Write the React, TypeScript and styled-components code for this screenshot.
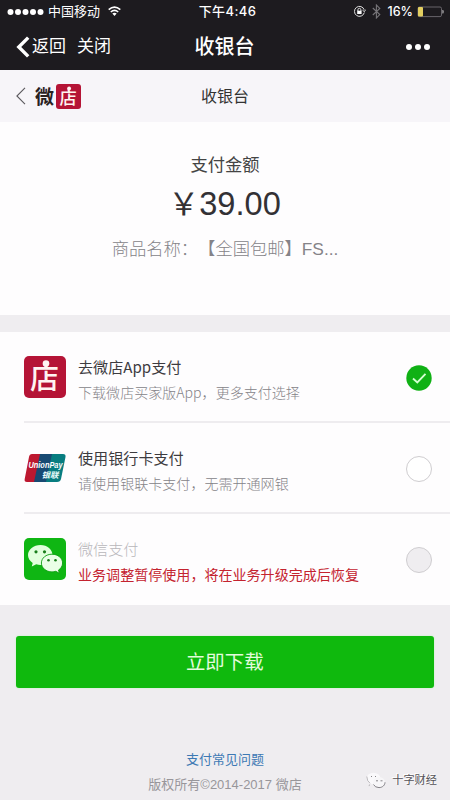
import React from 'react';
import styled, { createGlobalStyle } from 'styled-components';

const GlobalStyle = createGlobalStyle`
  * { box-sizing: border-box; }
  body {
    margin: 0;
    background: #efedf0;
    font-family: "Liberation Sans", "Noto Sans CJK SC", sans-serif;
    color: #333;
    text-spacing-trim: space-all;
  }
  svg { display: block; flex: none; }
`;

const Page = styled.div`
  width: 450px;
  height: 800px;
  display: flex;
  flex-direction: column;
  overflow: hidden;
  background: #efedf0;
`;

const TopArea = styled.div`
  height: 70px;
  background: #1d1b1f;
  color: #fff;
`;

const ThreeColumns = styled.div`
  display: grid;
  grid-template-columns: 1fr auto 1fr;
  align-items: center;
`;

const StatusBar = styled(ThreeColumns)`
  height: 23px;
  padding: 0 6px 0 7px;
  font: 400 13px/23px Inter, "Noto Sans CJK SC", sans-serif;
`;

const Side = styled.div<{ $end?: boolean; $gap?: number }>`
  display: flex;
  align-items: center;
  justify-content: ${p => (p.$end ? 'flex-end' : 'flex-start')};
  gap: ${p => p.$gap ?? 0}px;
`;

const Time = styled.span`
  padding-left: 4px;
  font-weight: 500;
  letter-spacing: 0.4px;
`;

const Percent = styled.span`
  font-size: 12.5px;
  font-weight: 500;
  margin: 0 -2px 0 1px;
`;

const NavBar = styled(ThreeColumns)`
  height: 47px;
  padding: 0 20px 0 16px;
`;

const NavText = styled.span<{ $spaced?: boolean }>`
  font-size: 17px;
  line-height: 46px;
  margin-left: ${p => (p.$spaced ? 11 : 2)}px;
`;

const NavTitle = styled.h1`
  margin: 0 0 0 3px;
  font-size: 20px;
  line-height: 44px;
  font-weight: 500;
`;

const ShopHeader = styled(ThreeColumns)`
  height: 52px;
  padding: 0 16px;
  background: #f7f5f9;
`;

const ShopTitle = styled.h2`
  margin: 1px 0 0;
  font-size: 16px;
  line-height: 51px;
  font-weight: 400;
`;

const Wordmark = styled.span`
  margin: 0 2px 0 9px;
  font: 700 19px/28px "Noto Sans CJK SC", sans-serif;
  color: #29211f;
`;

const Amount = styled.section`
  height: 193px;
  padding-top: 30px;
  display: flex;
  flex-direction: column;
  align-items: center;
  background: #fefdfe;
`;

const AmountLabel = styled.div`
  font-size: 17.3px;
  line-height: 26px;
  color: #444;
`;

const Price = styled.div`
  margin-right: 1px;
  font-size: 32.6px;
  line-height: 52px;
  color: #333135;
`;

const Yen = styled.span`
  font-size: 31px;
  font-weight: 400;
`;

const Product = styled.div`
  margin-top: -4px;
  font-size: 17.3px;
  line-height: 44px;
  font-weight: 300;
  color: #858388;
  white-space: nowrap;
`;

const Methods = styled.section`
  margin-top: 17px;
  height: 273px;
  padding-left: 24px;
  background: #fefdfe;
`;

const Method = styled.div<{ $divided?: boolean }>`
  height: 91px;
  padding-right: 18px;
  display: flex;
  align-items: center;
  border-bottom: 2px solid ${p => (p.$divided ? '#eeecef' : 'transparent')};
`;

const MethodText = styled.div`
  flex: 1;
  margin: 5px 0 0 12px;
  font-family: "Noto Sans CJK SC", sans-serif;
`;

const MethodName = styled.div<{ $disabled?: boolean }>`
  font-size: 15.1px;
  line-height: 26px;
  font-weight: ${p => (p.$disabled ? 300 : 400)};
  color: ${p => (p.$disabled ? '#b8b6ba' : '#3d3b3f')};
`;

const MethodNote = styled.div<{ $warning?: boolean }>`
  font-size: 14.05px;
  line-height: 26px;
  font-weight: ${p => (p.$warning ? 400 : 300)};
  color: ${p => (p.$warning ? '#c4232f' : '#858388')};
`;

const Radio = styled.span<{ $disabled?: boolean }>`
  width: 26px;
  height: 26px;
  margin-top: 2px;
  border: 1.5px solid #cfcdd0;
  border-radius: 50%;
  background: ${p => (p.$disabled ? '#efedf0' : '#fff')};
`;

const DownloadButton = styled.button`
  margin: 31px 16px 0 15.5px;
  height: 52px;
  flex: none;
  border: 0;
  border-radius: 3px;
  background: #0fb90d;
  color: #e3fbdc;
  font: 400 19.4px/50px "Liberation Sans", "Noto Sans CJK SC", sans-serif;
  box-shadow: 0 0 2px #b9f5b9;
`;

const Footer = styled.footer`
  position: relative;
  flex: 1;
  padding-top: 60px;
  text-align: center;
  font-size: 13px;
  line-height: 24px;
  color: #98969a;
`;

const HelpLink = styled.a`
  display: block;
  color: #3d79b4;
`;

const Copyright = styled.div`
  margin-top: 1px;
`;

const Watermark = styled.div`
  position: absolute;
  right: 13px;
  top: 82px;
  display: flex;
  align-items: center;
  gap: 6px;
  font-size: 11.2px;
  line-height: 20px;
  color: #555358;
  text-shadow: -1px -1px 0 #fff;
`;

const Signal = () => (
  <svg width="37" height="8" viewBox="0 0 37 8" fill="#fff">
    {[3.5, 11, 18.5, 26, 33.5].map(x => <circle key={x} cx={x} cy="4" r="3" />)}
  </svg>
);

const Wifi = () => (
  <svg width="13" height="11" viewBox="0 0 13 11" fill="none" stroke="#fff" strokeWidth="1.6">
    <path d="M.7 3.7Q6.5-1.3 12.3 3.7M2.8 6Q6.5 2.8 10.2 6" />
    <path d="M4.3 7.6Q6.5 5.8 8.7 7.6L6.5 10Z" fill="#fff" stroke="none" />
  </svg>
);

const RotationLock = () => (
  <svg width="13" height="13" viewBox="0 0 13 13" fill="none" stroke="#ddd" strokeWidth="1">
    <path d="M11.3 7.6A5 5 0 1 1 11.2 4.8M9.5 5.2l1.9 1.5 1.2-2" />
    <path d="M4.9 6V4.8a1.5 1.5 0 0 1 3 0V6" />
    <rect x="4.2" y="5.7" width="4.4" height="3.3" fill="#fff" stroke="none" />
  </svg>
);

const Bluetooth = () => (
  <svg width="9" height="15" viewBox="0 0 9 15" fill="none" stroke="#777579" strokeWidth="1.1">
    <path d="M.8 4l7 6.6L4.4 14V1l3.4 3.4L.8 11" />
  </svg>
);

const Battery = () => (
  <svg width="27" height="12" viewBox="0 0 27 12">
    <rect x="1" y="1" width="23.5" height="9.6" rx="1.5" fill="none" stroke="#68656b" />
    <rect x="1" y="1" width="5" height="9.6" rx="1" fill="#e3cf60" />
    <path d="M25.5 4h.7q.8 1.8 0 3.6h-.7z" fill="#ddd" />
  </svg>
);

const BackArrow = () => (
  <svg width="14" height="22" viewBox="0 0 14 22" fill="none" stroke="#fff" strokeWidth="3.4">
    <path d="M12.2 1.6 2.8 11l9.4 9.4" />
  </svg>
);

const More = () => (
  <svg width="25" height="8" viewBox="0 0 25 8" fill="#fff">
    <circle cx="4" cy="4" r="3" /><circle cx="13" cy="4" r="3" /><circle cx="22" cy="4" r="3" />
  </svg>
);

const ThinArrow = () => (
  <svg width="10" height="18" viewBox="0 0 10 18" fill="none" stroke="#5b595e" strokeWidth="1.1">
    <path d="M9 .8.9 9 9 17.2" />
  </svg>
);

const ShopLogo = ({ size }: { size: number }) => (
  <svg width={size} height={size} viewBox="0 0 42 42">
    <rect width="42" height="42" rx="5" fill="#b51436" />
    <text x="20.5" y="33" textAnchor="middle" fontFamily="Noto Sans CJK SC" fontWeight="500" fontSize="29" fill="#fff4f2">店</text>
    <circle cx="22" cy="7.5" r="3.3" fill="#fff4f2" />
  </svg>
);

const UnionPay = () => (
  <svg width="42" height="42" viewBox="0 0 42 42">
    <path d="M8 7h13l-6 28H3q-3 0-2.3-3L5 10q.5-3 3-3z" fill="#bd1830" />
    <path d="M16 7h15l-6 28H10z" fill="#184a73" />
    <path d="M28 7h11q3 0 2.5 3L37 32q-.6 3-4 3H22z" fill="#087d80" />
    <text x="4.5" y="21" textLength="34" lengthAdjust="spacingAndGlyphs" fontFamily="Liberation Sans" fontStyle="italic" fontWeight="700" fontSize="8.5" fill="#fff">UnionPay</text>
    <text x="17.5" y="30.5" textLength="17" lengthAdjust="spacingAndGlyphs" fontFamily="Noto Sans CJK SC" fontStyle="italic" fontWeight="700" fontSize="8" fill="#e9fbfa">银联</text>
  </svg>
);

const WeChat = () => (
  <svg width="42" height="42" viewBox="0 0 42 42">
    <rect width="42" height="42" rx="5" fill="#0fb613" />
    <path d="M16.5 7C9.6 7 4 11.5 4 17.1c0 3.2 1.8 6 4.7 7.9l-.9 3.5 4.4-2.2c1.4.4 2.8.6 4.3.6 6.9 0 12-4.2 12-9.800S23.400 7 16.500 7z" fill="#e2ffdd" />
    <path d="M28 16.200c-5.900 0-10.600 3.900-10.600 8.800s4.700 8.900 10.600 8.900c1.300 0 2.600-.2 3.800-.6l3.600 2-.9-3.200c2.500-1.600 4.100-4.100 4.100-7.100 0-4.900-4.700-8.800-10.600-8.800z" fill="#eaffe7" stroke="#0b9c10" strokeWidth=".9" />
    <g fill="#197d1b"><circle cx="12" cy="13.8" r="1.6" /><circle cx="20.5" cy="13.8" r="1.6" /><circle cx="24.500" cy="22.300" r="1.300" /><circle cx="31.500" cy="22.300" r="1.300" /></g>
  </svg>
);

const CheckedMark = styled.svg`
  margin-top: 2px;
`;

const Checked = () => (
  <CheckedMark width="26" height="26" viewBox="0 0 26 26">
    <circle cx="13" cy="13" r="12.7" fill="#10b115" />
    <path d="m7 13.5 4.3 4 8.2-8.7" fill="none" stroke="#d3ffd0" strokeWidth="1.9" />
  </CheckedMark>
);

const WatermarkIcon = () => (
  <svg width="20" height="17" viewBox="0 0 20 17">
    <ellipse cx="7.5" cy="6.5" rx="7" ry="5.8" fill="#faf9fb" />
    <path d="M.8 4.5Q1 9.5 4 11.2M3.5 12.5l-.4 1.6" fill="none" stroke="#a9a7ab" strokeWidth=".8" />
    <ellipse cx="13" cy="10.3" rx="6" ry="5.3" fill="#f7f6f8" />
    <path d="M7.5 12.5Q9 15.6 13 15.6c3.5 0 6-2.5 6-5.3" fill="none" stroke="#77757a" strokeWidth=".9" />
    <path d="M10 8.8h2M14.500 8.800h2M5 4.500h1M9 4.500h1" stroke="#88868a" strokeWidth="1" />
  </svg>
);

export default function App() {
  return (
    <Page>
      <GlobalStyle />
      <TopArea>
        <StatusBar>
          <Side $gap={4}><Signal /><span>中国移动</span><span /><Wifi /></Side>
          <Time>下午4:46</Time>
          <Side $end $gap={6}><RotationLock /><Bluetooth /><Percent>16%</Percent><Battery /></Side>
        </StatusBar>
        <NavBar>
          <Side><BackArrow /><NavText>返回</NavText><NavText $spaced>关闭</NavText></Side>
          <NavTitle>收银台</NavTitle>
          <Side $end><More /></Side>
        </NavBar>
      </TopArea>
      <ShopHeader>
        <Side><ThinArrow /><Wordmark>微</Wordmark><ShopLogo size={25} /></Side>
        <ShopTitle>收银台</ShopTitle>
        <span />
      </ShopHeader>
      <Amount>
        <AmountLabel>支付金额</AmountLabel>
        <Price><Yen>￥</Yen>39.00</Price>
        <Product>商品名称：【全国包邮】FS...</Product>
      </Amount>
      <Methods>
        <Method $divided>
          <ShopLogo size={42} />
          <MethodText>
            <MethodName>去微店App支付</MethodName>
            <MethodNote>下载微店买家版App，更多支付选择</MethodNote>
          </MethodText>
          <Checked />
        </Method>
        <Method $divided>
          <UnionPay />
          <MethodText>
            <MethodName>使用银行卡支付</MethodName>
            <MethodNote>请使用银联卡支付，无需开通网银</MethodNote>
          </MethodText>
          <Radio />
        </Method>
        <Method>
          <WeChat />
          <MethodText>
            <MethodName $disabled>微信支付</MethodName>
            <MethodNote $warning>业务调整暂停使用，将在业务升级完成后恢复</MethodNote>
          </MethodText>
          <Radio $disabled />
        </Method>
      </Methods>
      <DownloadButton>立即下载</DownloadButton>
      <Footer>
        <HelpLink>支付常见问题</HelpLink>
        <Copyright>版权所有©2014-2017 微店</Copyright>
        <Watermark><WatermarkIcon />十字财经</Watermark>
      </Footer>
    </Page>
  );
}
